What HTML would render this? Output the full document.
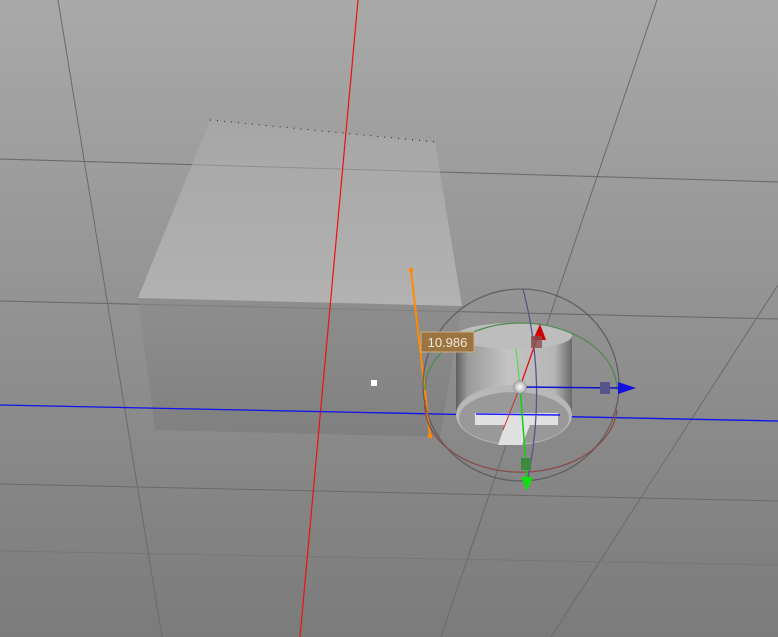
<!DOCTYPE html>
<html><head><style>html,body{margin:0;padding:0;overflow:hidden}body{width:778px;height:637px}</style></head>
<body>
<svg width="778" height="637" viewBox="0 0 778 637" xmlns="http://www.w3.org/2000/svg" style="display:block">
<defs>
<linearGradient id="bg" x1="0" y1="0" x2="0" y2="1"><stop offset="0" stop-color="#a9a9a9"/><stop offset="1" stop-color="#7b7b7b"/></linearGradient>
<linearGradient id="top" x1="0" y1="0" x2="0" y2="1"><stop offset="0" stop-color="#a6a6a6"/><stop offset="1" stop-color="#b2b2b2"/></linearGradient>
<linearGradient id="front" x1="0" y1="0" x2="0" y2="1"><stop offset="0" stop-color="#8e8e8e"/><stop offset="1" stop-color="#808080"/></linearGradient>
<linearGradient id="cyl" x1="0" y1="0" x2="1" y2="0"><stop offset="0" stop-color="#606060"/><stop offset="0.1" stop-color="#9a9a9a"/><stop offset="0.45" stop-color="#c4c4c4"/><stop offset="0.85" stop-color="#b5b5b5"/><stop offset="1" stop-color="#6a6a6a"/></linearGradient>
<radialGradient id="ball"><stop offset="0" stop-color="#fff"/><stop offset="1" stop-color="#aaa"/></radialGradient>
</defs>
<rect width="778" height="637" fill="url(#bg)"/>
<g stroke="#6a6a6a" stroke-width="1" fill="none">
<line x1="0" y1="159" x2="778" y2="182"/>
<line x1="0" y1="301" x2="778" y2="319"/>
<line x1="0" y1="484" x2="778" y2="501"/>
<line x1="0" y1="551" x2="778" y2="565" stroke="#777"/>
<line x1="58" y1="0" x2="162" y2="637"/>
<line x1="657" y1="0" x2="441" y2="637"/>
<line x1="778" y1="285" x2="551" y2="637"/>
</g>
<polygon points="138,298 462,306 440,437 155,430" fill="url(#front)"/>
<polygon points="210,120 435,142 462,306 138,298" fill="url(#top)"/>
<line x1="210" y1="120" x2="435" y2="142" stroke="#222" stroke-width="1" stroke-dasharray="1,6"/>
<line x1="0" y1="159" x2="778" y2="182" stroke="#6a6a6a" opacity="0.4"/>
<line x1="0" y1="301" x2="778" y2="319" stroke="#6a6a6a" opacity="0.4"/>
<line x1="358" y1="0" x2="300" y2="637" stroke="#f01010" stroke-width="1.2"/>
<line x1="0" y1="405" x2="778" y2="421" stroke="#1010f0" stroke-width="1.3"/>
<rect x="371" y="380" width="6" height="6" fill="#fff"/>
<line x1="411" y1="270" x2="430" y2="436" stroke="#ff8c00" stroke-width="2"/>
<rect x="409" y="268" width="4" height="4" fill="#ff8c00"/><rect x="428" y="434" width="4" height="4" fill="#ff8c00"/>
<path d="M456,336 L456,412 A58,28 0 0 0 572,412 L572,336 Z" fill="url(#cyl)"/>
<ellipse cx="514" cy="336" rx="58" ry="13" fill="#bdbdbd"/>
<ellipse cx="514" cy="415" rx="58" ry="30" fill="#b8b8b8"/>
<ellipse cx="514" cy="418" rx="55" ry="26" fill="#999"/>
<polygon points="475,413 558,413 558,425 530,425 522,445 498,445 505,425 475,425" fill="#e0e0e0"/>
<line x1="476" y1="414" x2="560" y2="415" stroke="#1a1aff" stroke-width="1.5"/>
<ellipse cx="521" cy="385" rx="98" ry="96" fill="none" stroke="#555" stroke-width="1.3" opacity="0.8"/>
<path d="M425,390 A96,67 0 0 1 617,390" fill="none" stroke="#4f8a4f" stroke-width="1.3"/>
<path d="M425,400 A96,67 0 0 0 617,410" fill="none" stroke="#8a4a4a" stroke-width="1.3"/>
<path d="M523,289 Q548,385 527,482" fill="none" stroke="#55558a" stroke-width="1.3"/>
<line x1="520" y1="387" x2="540" y2="330" stroke="#e01010" stroke-width="1.3"/>
<line x1="520" y1="387" x2="503" y2="430" stroke="#c83030" stroke-width="1"/>
<polygon points="540,324 546,340 533,340" fill="#d00000"/>
<rect x="531" y="336" width="11" height="12" fill="#8a5050" opacity="0.8"/>
<line x1="516" y1="348" x2="520" y2="387" stroke="#40e040" stroke-width="1"/>
<line x1="520" y1="387" x2="527" y2="478" stroke="#10d010" stroke-width="1.5"/>
<rect x="521" y="458" width="10" height="12" fill="#3a8a3a" opacity="0.9"/>
<polygon points="521,477 533,477 527,491" fill="#10e010"/>
<line x1="520" y1="387" x2="620" y2="388" stroke="#1010d0" stroke-width="1.5"/>
<rect x="600" y="382" width="10" height="12" fill="#55558a"/>
<polygon points="618,382 636,388 618,394" fill="#1010e0"/>
<circle cx="520" cy="387" r="6.5" fill="url(#ball)" stroke="#888" stroke-width="0.5"/>
<rect x="421" y="332" width="53" height="20" fill="#9c7440" stroke="#c8b08a" stroke-width="1"/>
<text x="447.5" y="347" font-family="Liberation Sans, sans-serif" font-size="13" fill="#f0e8dc" text-anchor="middle">10.986</text>
</svg>
</body></html>
